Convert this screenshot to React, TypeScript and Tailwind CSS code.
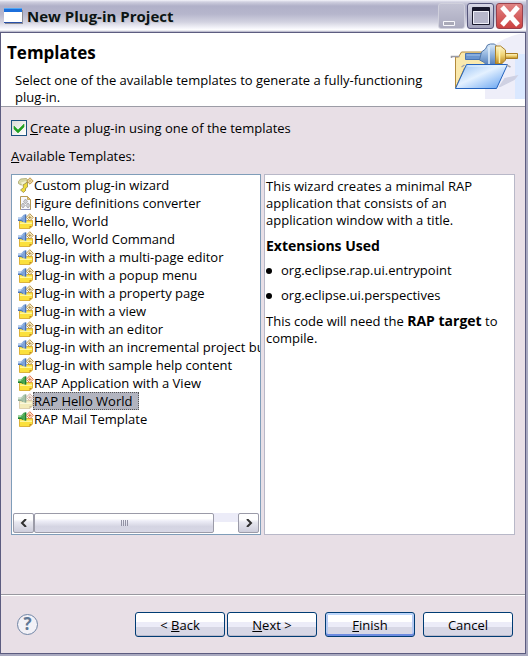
import { useState, type ReactNode } from "react";

type IconKind = "wizard" | "figure" | "plugin" | "rap";

const templates: { name: string; icon: IconKind }[] = [
  { name: "Custom plug-in wizard", icon: "wizard" },
  { name: "Figure definitions converter", icon: "figure" },
  { name: "Hello, World", icon: "plugin" },
  { name: "Hello, World Command", icon: "plugin" },
  { name: "Plug-in with a multi-page editor", icon: "plugin" },
  { name: "Plug-in with a popup menu", icon: "plugin" },
  { name: "Plug-in with a property page", icon: "plugin" },
  { name: "Plug-in with a view", icon: "plugin" },
  { name: "Plug-in with an editor", icon: "plugin" },
  { name: "Plug-in with an incremental project builder", icon: "plugin" },
  { name: "Plug-in with sample help content", icon: "plugin" },
  { name: "RAP Application with a View", icon: "rap" },
  { name: "RAP Hello World", icon: "rap" },
  { name: "RAP Mail Template", icon: "rap" },
];

function TemplateIcon({ kind, faded }: { kind: IconKind; faded: boolean }) {
  if (kind === "wizard") {
    return (
      <svg className="h-4 w-4 shrink-0" viewBox="0 0 16 16" aria-hidden="true">
        <path d="M.5 4.500l2-2.500 6-.5 1.500 2-1.500 3L3 8 .5 6.500z" fill="#d9d8a4" stroke="#a8a468" strokeWidth=".8" />
        <path d="M3 5.500l5-1.500-.5 3-3.500 1z" fill="#f4f2cf" />
        <path d="M5 8l4.500-3L9.500 10 7 12l1 1-2.500 2.500L2.500 13l3-2.500z" fill="#eedb3c" stroke="#98894a" strokeWidth=".8" />
        <path d="M12 .8l3.200 3.200L12 7.200 8.800 4z" fill="#fffbe6" stroke="#b8882c" strokeWidth=".9" />
        <path d="M12 2v4M10 4h4" stroke="#d0a850" strokeWidth=".9" />
      </svg>
    );
  }
  if (kind === "figure") {
    return (
      <svg className="h-4 w-4 shrink-0" viewBox="0 0 16 16" aria-hidden="true">
        <path d="M2.500 1.500h7l3 3v10h-10z" fill="#f7f8fc" stroke="#b79a55" />
        <path d="M9.500 1.500v3h3z" fill="#ecc96c" stroke="#b79a55" strokeWidth=".8" />
        <path d="M7.500 4l2 2.500-2 2.500-2-2.500zM5 8l2 2.500L5 13l-2-2.500zM10 8l2 2.500-2 2.500-2-2.500z" fill="#cfcfd2" stroke="#9a9a9e" strokeWidth=".7" />
        <path d="M3 14.500h9.500" stroke="#8f93b8" />
      </svg>
    );
  }
  const green = kind === "rap";
  const star = green ? "#e0643c" : "#b08a3c";
  return (
    <svg className={`h-4 w-4 shrink-0 ${faded ? "opacity-60 grayscale-50" : ""}`} viewBox="0 0 16 16" aria-hidden="true">
      <path d="M1.500 7.500h13V13L12 15.500H1.500z" fill="#fbe03c" stroke="#d9ac30" strokeWidth=".9" />
      <path d="M2 9.500h12V11H2z" fill="#fff79a" />
      <path d="M11.500 15.500V13H14z" fill="#c08a20" />
      <path d="M0 4.500h3l2-2 1-1h2.500v8H6L5 8.500 3 7.500H0z" fill={green ? "#4aa850" : "#7ea4da"} />
      <path d="M0 5.500h3l2-2" fill="none" stroke={green ? "#9ad49a" : "#b8d0f2"} />
      <path d="M7.500 1.500v8M0 7.500h3L5 8.500" fill="none" stroke={green ? "#1d7a34" : "#4a72b4"} />
      <path d="M11.800 .7l3.500 3.600-3.500 3.600-3.500-3.600z" fill="#fff8dc" stroke={star} strokeWidth=".9" />
      <path d="M11.800 2.500v3.600M10 4.300h3.600" stroke={star} strokeWidth=".9" />
    </svg>
  );
}

function BannerIcon() {
  return (
    <svg className="h-[66px] w-[76px] shrink-0" viewBox="0 0 76 66" aria-hidden="true">
      <defs>
        <linearGradient id="folder" x1="0" y1="0" x2="1" y2="1">
          <stop offset="0" stopColor="#8fbcf3" />
          <stop offset=".45" stopColor="#e4f1ff" />
          <stop offset="1" stopColor="#5a9cf0" />
        </linearGradient>
        <linearGradient id="blueKnob" x1="0" y1="0" x2="0" y2="1">
          <stop offset="0" stopColor="#dcecfb" />
          <stop offset=".5" stopColor="#90b3dd" />
          <stop offset="1" stopColor="#4d78b4" />
        </linearGradient>
        <linearGradient id="goldKnob" x1="0" y1="0" x2="0" y2="1">
          <stop offset="0" stopColor="#fff8cf" />
          <stop offset=".5" stopColor="#f0d373" />
          <stop offset="1" stopColor="#b8851f" />
        </linearGradient>
      </defs>
      <path d="M36 66V24C42 12 56 3 76 0v66z" fill="#eeeef9" />
      <path d="M66 21h10v45H66z" fill="#dae8ff" />
      <g transform="translate(1.500 0)">
        <path d="M48 54l6-9 14-3-4 5-14 7z" fill="#cfd1e3" />
        <path d="M5 55V24h3l3-5h22l3 4v12H14z" fill="#fae9ad" stroke="#b38a3c" />
        <path d="M1 25v-1.500h8" fill="none" stroke="#9a9aa4" strokeWidth="1.500" />
        <path d="M15 20.500h17v6H15z" fill="#6b96d0" stroke="#4975b3" />
        <path d="M16 22h16" stroke="#a8c6ec" />
        <path d="M54 20.500h13v5H54z" fill="url(#goldKnob)" stroke="#a97c24" />
        <path d="M31 19l4-3 2-4 3-1h4l2 2v18l-2 2h-7l-4-4-4-2z" fill="url(#blueKnob)" stroke="#5377a8" />
        <path d="M38.500 14v17" stroke="#e2effa" strokeWidth="1.500" />
        <path d="M45 13h5l5 4v10l-4 4h-6z" fill="url(#goldKnob)" stroke="#aa802b" />
        <path d="M49 15v15" stroke="#fff3b0" strokeWidth="1.500" />
        <path d="M16 31.500h41L46 55.500H5z" fill="url(#folder)" stroke="#2463bd" />
        <path d="M17 33h38" stroke="#e8f5ff" />
        <path d="M11 34l3-2M56 32l4 2" stroke="#a4a4ad" strokeWidth="1.500" />
      </g>
    </svg>
  );
}

function WindowButton({ label, tone, children }: { label: string; tone: string; children: ReactNode }) {
  return (
    <button aria-label={label} className={`flex h-[26px] w-[27px] items-center justify-center rounded-[3px] border ${tone}`}>
      <svg className="h-6 w-6" viewBox="0 0 24 24" aria-hidden="true">{children}</svg>
    </button>
  );
}

function DialogButton({ children, primary = false }: { children: ReactNode; primary?: boolean }) {
  const ring = primary
    ? "shadow-[inset_0_2px_0_#bcd6fb,inset_0_-2px_0_#6c8be0,inset_2px_0_0_#b5c9f2,inset_-2px_0_0_#b5c9f2]"
    : "shadow-[inset_0_-1px_0_#b9b9cb]";
  return (
    <button className={`h-[25px] w-[90px] rounded-[3px] border border-[#003c74] bg-[linear-gradient(#fff_0_40%,#ececf8_40%_60%,#d7d7e5_60%)] text-center leading-6 ${ring}`}>
      {children}
    </button>
  );
}

function ScrollButton({ label, path }: { label: string; path: string }) {
  return (
    <button aria-label={label} className="flex w-[21px] shrink-0 items-center justify-center rounded-[2px] border border-[#9b9ba8] bg-[linear-gradient(#fff_0_30%,#e8e8f0_45%,#cdcddb)]">
      <svg className="h-2 w-2" viewBox="0 0 8 8" aria-hidden="true">
        <path d={path} fill="none" stroke="#303030" strokeWidth="2" />
      </svg>
    </button>
  );
}

export default function App() {
  const [selected, setSelected] = useState(12);
  const [enabled, setEnabled] = useState(true);

  return (
    <div className="flex min-h-screen flex-col bg-[#a9a9c0] pr-[2px] pb-[2px] font-['Open_Sans','Noto_Sans',sans-serif] text-[13px] leading-[17px] text-black">
      <header className="flex h-8 items-center bg-[linear-gradient(#f4f4fa_0,#cfcfdf_2px,#b0b0c8_6px,#b6b6cc_14px,#d2d2e0_22px,#f4f4fa_28px,#fff_30px,#a9a9c0_32px)] pl-1">
        <svg className="h-4 w-[19px]" viewBox="0 0 19 16" aria-hidden="true">
          <path d="M1 2h18v14H1z" fill="#8c8c94" />
          <path d="M0 0h18v15H0z" fill="#fff" />
          <path d="M0 0h18v4H0z" fill="#1c6fdc" />
          <path d="M0 0h18v1H0z" fill="#53a9f5" />
          <path d="M0 14h18v1H0z" fill="#2850a8" />
        </svg>
        <h1 className="ml-1 flex-1 text-[15px] leading-5 font-bold text-[#0c1414] [text-shadow:1px_1px_0_#c4c4cc]">New Plug-in Project</h1>
        <div className="flex gap-[2px] pr-[3px]">
          <WindowButton label="Minimize" tone="border-[#d0d0dc] bg-[linear-gradient(#c3c3d4,#aaaabf)]">
            <path d="M3.500 17.500h11v4h-11z" fill="#a9a9b8" stroke="#f8f8fc" />
          </WindowButton>
          <WindowButton label="Maximize" tone="border-[#55557a] bg-[linear-gradient(#d8d8e6,#a2a2bc)]">
            <path d="M3.500 3.500h17v17h-17z" fill="#b6b6cb" stroke="#18182c" />
            <path d="M4 5.500h16" stroke="#18182c" strokeWidth="3" />
            <path d="M4.500 7.500h15v12h-15z" fill="none" stroke="#eeeef8" />
          </WindowButton>
          <WindowButton label="Close" tone="border-[#98404c] bg-[linear-gradient(#e08484,#cc4242)]">
            <path d="M4 3l16 18M20 3L4 21" stroke="#fff" strokeWidth="5" />
          </WindowButton>
        </div>
      </header>

      <div className="flex flex-1 flex-col border border-[#5c5c80] bg-[#e8dfe6]">
        <section className="flex h-[74px] justify-between border-b border-[#9c9ca6] bg-white">
          <div className="pt-2 pl-[6px]">
            <h2 className="text-[17px] leading-6 font-bold">Templates</h2>
            <p className="mt-[7px] max-w-[430px] pl-2">Select one of the available templates to generate a fully-functioning plug-in.</p>
          </div>
          <BannerIcon />
        </section>

        <main className="flex flex-1 flex-col px-[10px] pt-[11px] pb-[59px]">
          <label className="flex items-center gap-[3px] leading-5">
            <span className="relative flex h-4 w-4">
              <input
                type="checkbox"
                checked={enabled}
                onChange={(e) => setEnabled(e.target.checked)}
                className="peer h-4 w-4 appearance-none border border-[#1c5180] bg-[linear-gradient(135deg,#dcdcd7,#fff)]"
              />
              <svg className="pointer-events-none absolute inset-0 hidden h-4 w-4 peer-checked:block" viewBox="0 0 16 16" aria-hidden="true">
                <path d="M3 6l4 4 6-6v3l-6 6-4-4z" fill="#21a121" stroke="#21a121" strokeWidth=".6" />
              </svg>
            </span>
            <span><u>C</u>reate a plug-in using one of the templates</span>
          </label>
          <p id="available" className="mt-2 leading-5"><u>A</u>vailable Templates:</p>

          <div className="mt-2 flex flex-1 gap-[3px]">
            <div className="flex w-[250px] shrink-0 flex-col border border-[#7f9db9] bg-white">
              <ul role="listbox" aria-labelledby="available" className="flex-1 overflow-hidden pt-[1px] pl-[6px]">
                {templates.map((template, index) => (
                  <li
                    key={template.name}
                    role="option"
                    aria-selected={selected === index}
                    onClick={() => setSelected(index)}
                    className="flex h-[18px] cursor-default items-center whitespace-nowrap"
                  >
                    <TemplateIcon kind={template.icon} faded={selected === index} />
                    <span className={selected === index ? "-ml-px border border-dotted border-[#555] bg-[#b2b4bf] pr-[6px] leading-4" : "leading-[18px]"}>
                      {template.name}
                    </span>
                  </li>
                ))}
              </ul>
              <div className="m-[1px] flex h-5 bg-[linear-gradient(#ececf8_45%,#fff_45%)]">
                <ScrollButton label="Scroll left" path="M6 0L2 4l4 4" />
                <div className="flex w-[180px] items-center justify-center gap-[1px] rounded-[2px] border border-[#9b9ba8] bg-[linear-gradient(#fff_0_25%,#ececf6_40%,#d4d4e2_70%,#d8d8e6)]">
                  {[0, 1, 2, 3].map((grip) => (
                    <span key={grip} className="h-[6px] w-[1px] bg-[#9292a4]" />
                  ))}
                </div>
                <div className="flex-1" />
                <ScrollButton label="Scroll right" path="M2 0l4 4-4 4" />
              </div>
            </div>

            <article className="min-w-0 flex-1 border border-[#b8b8c8] bg-white px-[1px] pt-[3px]">
              <p>This wizard creates a minimal RAP application that consists of an application window with a title.</p>
              <h3 className="mt-2 text-sm leading-[17px] font-bold">Extensions Used</h3>
              <ul className="mt-2 flex flex-col gap-2">
                {["org.eclipse.rap.ui.entrypoint", "org.eclipse.ui.perspectives"].map((extension) => (
                  <li key={extension} className="flex items-center gap-[9px]">
                    <span className="h-[6px] w-[6px] rounded-full bg-black" />
                    {extension}
                  </li>
                ))}
              </ul>
              <p className="mt-2">This code will need the <b className="text-sm leading-[17px]">RAP target</b> to compile.</p>
            </article>
          </div>
        </main>

        <footer className="flex h-[59px] items-center border-t border-[#98989f] pr-3 pl-4 shadow-[inset_0_1px_0_#fff]">
          <button aria-label="Help" className="flex h-[21px] w-[21px] items-center justify-center rounded-full border border-[#7085a5] bg-[#f2f1f7] text-[17px] leading-5 font-bold text-[#607795]">?</button>
          <div className="ml-auto flex gap-2">
            <div className="flex gap-[2px]">
              <DialogButton>&lt; <u>B</u>ack</DialogButton>
              <DialogButton><u>N</u>ext &gt;</DialogButton>
            </div>
            <DialogButton primary><u>F</u>inish</DialogButton>
            <DialogButton>Cancel</DialogButton>
          </div>
        </footer>
      </div>
    </div>
  );
}
